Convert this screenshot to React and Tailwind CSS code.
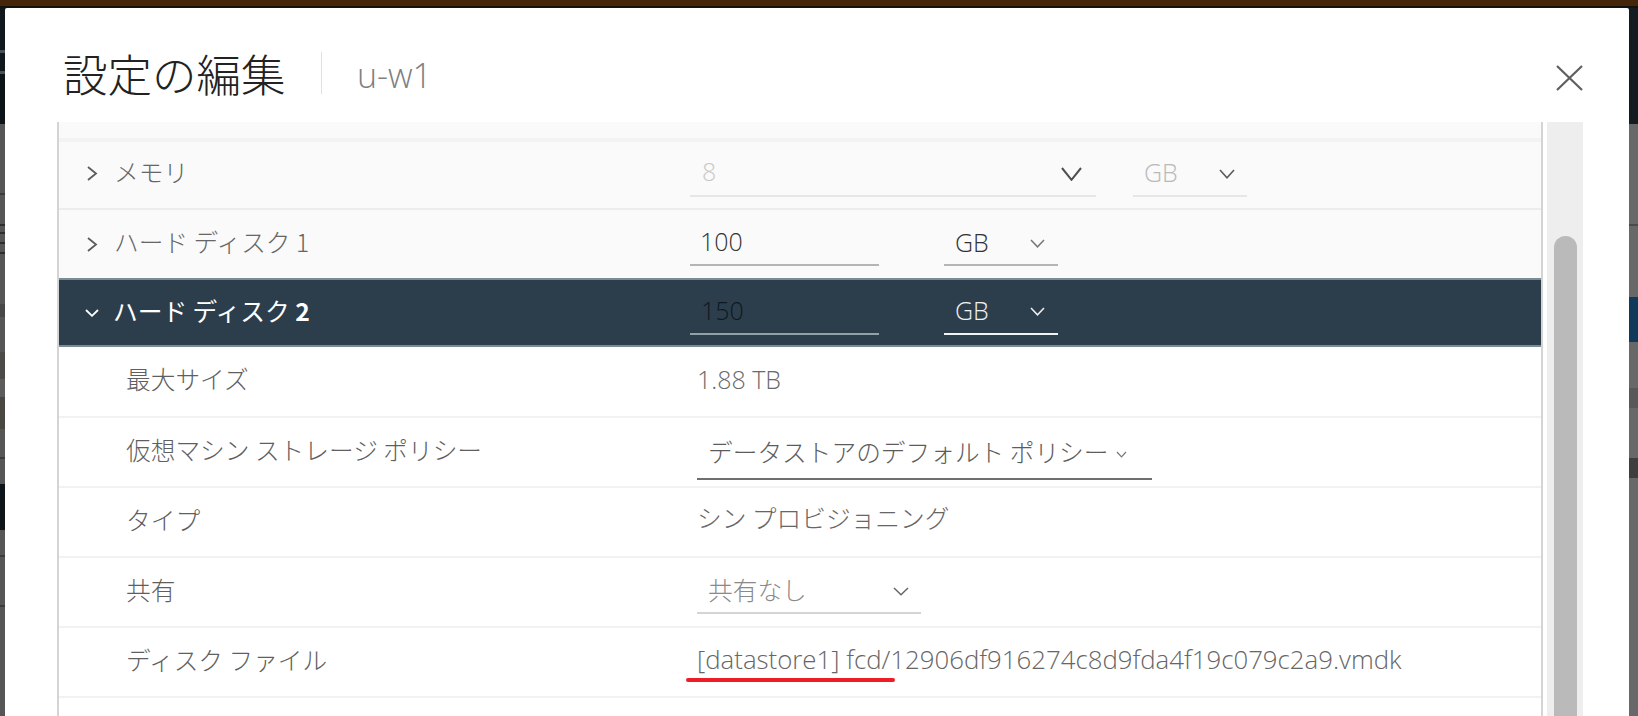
import React from "react";

const CJK = { fontFamily: '"Noto Sans CJK JP", "Open Sans", sans-serif' };
const LAT = { fontFamily: '"Open Sans", "Noto Sans CJK JP", sans-serif' };

function Chev({ className = "", w = 15, h = 9, sw = 1.5 }) {
  return (
    <svg width={w} height={h} viewBox={`0 0 ${w} ${h}`} fill="none" className={className}>
      <path d={`M1 1 L${w / 2} ${h - 1.2} L${w - 1} 1`} stroke="currentColor" strokeWidth={sw} />
    </svg>
  );
}

function Right({ className = "" }) {
  return (
    <svg width="12" height="15" viewBox="0 0 12 15" fill="none" className={className}>
      <path d="M2 1 L10 7.5 L2 14" stroke="currentColor" strokeWidth="1.8" />
    </svg>
  );
}

function Row({ label, children, h = "h-[70px]" }) {
  return (
    <div className={`flex items-center ${h} border-b-2 border-[#f2f2f2] shrink-0`}>
      <div className="w-[638px] pl-[67px] text-[24.7px] font-light text-[#5f5f5f] leading-none whitespace-nowrap -translate-y-[3px]">{label}</div>
      <div className="flex-1 min-w-0">{children}</div>
    </div>
  );
}

const leftStrip = [
  "h-[42px] bg-[#10181d]", "h-[3px] bg-[#4a5155]", "h-[18px] bg-[#10181d]", "h-[3px] bg-[#4a5155]", "h-[50px] bg-[#0d1418]",
  "h-[69px] bg-[#565656]", "h-[2px] bg-[#3c3c3c]", "h-[29px] bg-[#565656]", "h-[2px] bg-[#2e2e2e]", "h-[6px] bg-[#565656]",
  "h-[2px] bg-[#2e2e2e]", "h-[8px] bg-[#565656]", "h-[2px] bg-[#2e2e2e]", "h-[8px] bg-[#565656]", "h-[2px] bg-[#2e2e2e]",
  "h-[50px] bg-[#565656]", "h-[13px] bg-[#474747]", "h-[35px] bg-[#565656]", "h-[27px] bg-[#4b4a47]", "h-[18px] bg-[#5c5c5c]",
  "h-[32px] bg-[#4a4642]", "h-[28px] bg-[#565656]", "h-[2px] bg-[#3c3c3c]", "h-[25px] bg-[#565656]", "h-[46px] bg-[#0e1418]",
  "h-[25px] bg-[#565656]", "h-[2px] bg-[#3c3c3c]", "h-[48px] bg-[#565656]", "h-[2px] bg-[#3c3c3c]", "flex-1 bg-[#565656]",
];

const rightStrip = [
  "h-[116px] bg-[#141c21]", "h-[100px] bg-[#686868]", "h-[2px] bg-[#4a4a4a]", "h-[71px] bg-[#686868]",
  "h-[45px] bg-[#10395c]", "h-[46px] bg-[#686868]", "h-[20px] bg-[#585858]", "h-[50px] bg-[#686868]", "h-[20px] bg-[#3e3e3e]", "flex-1 bg-[#686868]",
];

export default function App() {
  return (
    <div className="w-[1638px] h-[716px] overflow-hidden flex flex-col bg-[#14191d]" style={CJK}>
      <div className="h-[6px] bg-[#46260a] shrink-0" />
      <div className="h-[2px] bg-[#14120c] shrink-0" />
      <div className="flex flex-1 min-h-0">
        <div className="w-[5px] shrink-0 flex flex-col">
          {leftStrip.map((c, i) => <div key={i} className={`shrink-0 ${c}`} />)}
        </div>
        <div className="flex-1 min-w-0 bg-white flex flex-col rounded-t-[2px]">
          <div className="h-[114px] shrink-0 flex items-start">
            <div className="ml-[58px] mt-[35px] w-[224px] text-[44.5px] leading-[60px] font-light text-[#222] whitespace-nowrap">設定の編集</div>
            <div className="ml-[34px] mt-[44px] w-px h-[42px] bg-[#e0e0e0]" />
            <div className="ml-[35px] mt-[44px] text-[34px] leading-[46px] font-light text-[#808080]" style={LAT}>u-w1</div>
            <div className="ml-auto mr-[46px] mt-[57px] text-[#5f5f5f]">
              <svg width="27" height="26" viewBox="0 0 27 26" fill="none" className="block">
                <path d="M1 1 L26 25 M26 1 L1 25" stroke="currentColor" strokeWidth="2.2" />
              </svg>
            </div>
          </div>
          <div className="flex flex-1 min-h-0 ml-[52px] mr-[46px]">
            <div className="flex-1 min-w-0 border-x-2 border-[#d4d4d4] flex flex-col overflow-hidden">
              <div className="h-[20px] bg-[#fafafa] border-b-[4px] border-[#f3f3f3] shrink-0" />
              <div className="h-[68px] flex items-center bg-[#fafafa] border-b-2 border-[#ececec] shrink-0">
                <Right className="ml-[27px] text-[#5c5c5c] -translate-y-[2px]" />
                <div className="ml-[16px] w-[576px] text-[24.7px] font-light text-[#666] leading-none -translate-y-[4px] whitespace-nowrap">メモリ</div>
                <div className="w-[406px] h-[44px] border-b-2 border-[#e6e6e6] flex items-center justify-between text-[#c8c8c8] text-[25px] font-light" style={LAT}>
                  <span className="ml-[12px] -translate-y-[2px]">8</span>
                  <Chev className="mr-[14px] text-[#4f4f4f]" w={21} h={14} sw={2} />
                </div>
                <div className="ml-[37px] w-[114px] h-[44px] border-b-2 border-[#e6e6e6] flex items-center justify-between text-[#b9b9b9] text-[25px] font-light" style={LAT}>
                  <span className="ml-[11px] -translate-y-[1px]">GB</span>
                  <Chev className="mr-[12px] text-[#5c5c5c]" w={16} h={10} sw={1.6} />
                </div>
              </div>
              <div className="h-[68px] flex items-center bg-[#fafafa] shrink-0">
                <Right className="ml-[27px] text-[#5c5c5c]" />
                <div className="ml-[16px] w-[576px] text-[24.7px] font-light text-[#666] leading-none -translate-y-[3px] whitespace-nowrap">ハード ディスク 1</div>
                <div className="w-[189px] h-[44px] border-b-2 border-[#b5b5b5] flex items-center text-[#333] text-[25px] font-light" style={LAT}><span className="ml-[10px] -translate-y-[1px]">100</span></div>
                <div className="ml-[65px] w-[114px] h-[44px] border-b-2 border-[#b5b5b5] flex items-center justify-between text-[#333] text-[25px] font-light" style={LAT}>
                  <span className="ml-[11px]">GB</span>
                  <Chev className="mr-[13px] text-[#777]" />
                </div>
              </div>
              <div className="h-[69px] flex items-center bg-[#2c3e4c] border-y-2 border-[#7a8b94] shrink-0 text-white">
                <Chev className="ml-[26px] text-white" w={14} h={8} sw={1.8} />
                <div className="ml-[14px] w-[577px] text-[24.7px] font-normal leading-none -translate-y-[2px] whitespace-nowrap">ハード ディスク <span className="font-bold">2</span></div>
                <div className="w-[189px] h-[44px] border-b-2 border-[#91a0a9] flex items-center text-[#0f1820] text-[25px] font-light" style={LAT}><span className="ml-[11px] -translate-y-[1px]">150</span></div>
                <div className="ml-[65px] w-[114px] h-[44px] border-b-2 border-[#f2f2f2] flex items-center justify-between text-[#eef1f3] text-[25px] font-light" style={LAT}>
                  <span className="ml-[11px] -translate-y-[1px]">GB</span>
                  <Chev className="mr-[13px]" />
                </div>
              </div>
              <Row label="最大サイズ" h="h-[71px]"><span className="inline-block text-[25px] font-light text-[#6a6a6a] -translate-y-[2px]" style={LAT}>1.88 TB</span></Row>
              <Row label="仮想マシン ストレージ ポリシー">
                <div className="w-[455px] h-[50px] border-b-2 border-[#6f6f6f] flex items-center text-[24.7px] font-light text-[#5c5c5c] whitespace-nowrap translate-y-[3px]">
                  <span className="ml-[11px] -translate-y-[2px]">データストアのデフォルト ポリシー</span>
                  <Chev className="ml-[8px] text-[#777]" w={11} h={7} sw={1.2} />
                </div>
              </Row>
              <Row label="タイプ"><span className="inline-block text-[24.7px] font-light text-[#666] whitespace-nowrap -translate-y-[4px]">シン プロビジョニング</span></Row>
              <Row label="共有">
                <div className="w-[224px] h-[44px] border-b-2 border-[#d4d4d4] flex items-center justify-between text-[24.7px] font-light text-[#8a8a8a]">
                  <span className="ml-[11px] -translate-y-[1px]">共有なし</span>
                  <Chev className="mr-[12px] text-[#666]" w={16} h={9} />
                </div>
              </Row>
              <Row label="ディスク ファイル">
                <div className="relative text-[25.8px] font-light text-[#666] whitespace-nowrap" style={LAT}>
                  <span className="inline-block -translate-y-[3px]">[datastore1] fcd/12906df916274c8d9fda4f19c079c2a9.vmdk</span>
                  <div className="absolute left-[-11px] top-[35px] w-[209px] h-[4px] rounded-full bg-[#ee1c25]" />
                </div>
              </Row>
              <div className="flex-1" />
            </div>
            <div className="w-[36px] shrink-0 ml-[4px] bg-[#eeeeee] flex flex-col">
              <div className="mt-[114px] ml-[7px] w-[23px] flex-1 bg-[#bababa] rounded-t-full" />
            </div>
          </div>
        </div>
        <div className="w-[9px] shrink-0 flex flex-col">
          {rightStrip.map((c, i) => <div key={i} className={`shrink-0 ${c}`} />)}
        </div>
      </div>
    </div>
  );
}
